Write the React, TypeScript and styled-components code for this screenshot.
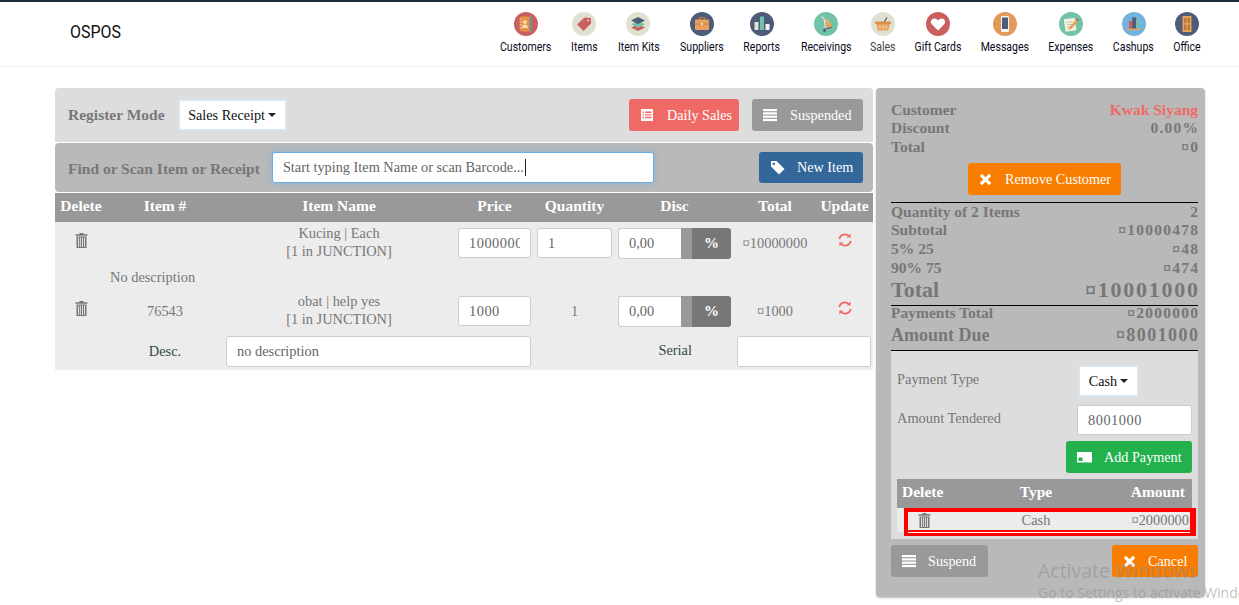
import { ReactNode } from 'react'
import styled, { createGlobalStyle } from 'styled-components'

const serif = `'Liberation Serif', Georgia, serif`

const GlobalStyle = createGlobalStyle`
  html, body {
    margin: 0;
    padding: 0;
    height: 605px;
    overflow: hidden;
    background: #ffffff;
    font-family: ${serif};
  }
  * {
    box-sizing: border-box;
  }
`

const Page = styled.div`
  position: relative;
  width: 1239px;
  height: 605px;
  overflow: hidden;
  border-top: 2px solid #1a2b3c;
`

const Header = styled.header`
  display: flex;
  align-items: flex-start;
  justify-content: space-between;
  height: 65px;
  padding: 10px 40px 0 70px;
  border-bottom: 1px solid #eeeeee;
`

const Logo = styled.div`
  width: 50px;
  margin-top: 9px;
  font-family: Roboto, sans-serif;
  font-size: 19px;
  line-height: 22px;
  color: #111111;
  transform: scaleX(0.84);
  transform-origin: left center;
`

const Nav = styled.nav`
  display: flex;
  gap: 19.8px;
`

const NavItem = styled.a<{ $width: number }>`
  display: flex;
  flex-direction: column;
  align-items: center;
  gap: 4px;
  width: ${({ $width }) => $width}px;
`

const NavLabel = styled.span<{ $active?: boolean }>`
  font-family: Roboto, sans-serif;
  font-size: 13px;
  line-height: 14px;
  color: ${({ $active }) => ($active ? '#444444' : '#0b0b1e')};
  white-space: nowrap;
  transform: scaleX(0.81);
`

const Main = styled.main`
  display: flex;
  gap: 3px;
  padding: 21px 0 0 55px;
`

const LeftColumn = styled.section`
  display: flex;
  flex-direction: column;
  width: 818px;
`

const RegisterBar = styled.div`
  display: flex;
  align-items: center;
  height: 54px;
  padding: 0 10px 0 13px;
  background: #dddddd;
  border-radius: 4px 4px 0 0;
`

const FindBar = styled.div`
  display: flex;
  align-items: center;
  height: 49px;
  margin-top: 1px;
  padding: 0 10px 0 13px;
  background: #b9b9b9;
  border-radius: 4px;
`

const BarLabel = styled.label<{ $drop?: number }>`
  margin-top: ${({ $drop }) => $drop ?? 0}px;
  font-size: 15.5px;
  font-weight: 700;
  color: #777777;
  white-space: nowrap;
`

const Spacer = styled.div`
  flex: 1;
`

const SelectButton = styled.div<{ $width: number; $ml?: number; $mr?: number }>`
  display: flex;
  align-items: center;
  justify-content: center;
  gap: 3px;
  width: ${({ $width }) => $width}px;
  height: 32px;
  margin: 0 ${({ $mr }) => $mr ?? 0}px 0 ${({ $ml }) => $ml ?? 0}px;
  background: #ffffff;
  border: 2px solid #dbe5ee;
  font-size: 14.2px;
  color: #111111;
`

const Caret = styled.span`
  width: 0;
  height: 0;
  border-top: 4px solid #222222;
  border-left: 4px solid transparent;
  border-right: 4px solid transparent;
`

const Button = styled.div<{ $bg: string; $width: number; $height?: number; $gap?: number; $ml?: number }>`
  display: flex;
  align-items: center;
  gap: ${({ $gap }) => $gap ?? 13}px;
  width: ${({ $width }) => $width}px;
  height: ${({ $height }) => $height ?? 32}px;
  margin-left: ${({ $ml }) => $ml ?? 0}px;
  padding-left: 11px;
  background: ${({ $bg }) => $bg};
  border-radius: 3px;
  font-size: 14.2px;
  color: #ffffff;
  white-space: nowrap;
  svg {
    flex: none;
  }
`

const SearchField = styled.div`
  display: flex;
  align-items: center;
  width: 382px;
  height: 31px;
  margin-left: 12px;
  padding-left: 10px;
  background: #ffffff;
  border: 1px solid #66afe9;
  border-radius: 3px;
  box-shadow: 0 0 6px rgba(102, 175, 233, 0.6);
  font-size: 14.3px;
  color: #666666;
  white-space: nowrap;
`

const TextCaret = styled.span`
  width: 1px;
  height: 17px;
  margin-left: 1px;
  background: #222222;
`

const ItemsTable = styled.table`
  width: 818px;
  margin-top: 1px;
  border-collapse: collapse;
  table-layout: fixed;
  background: #ececec;
`

const HeadCell = styled.th`
  height: 29px;
  padding: 0 0 3px;
  background: #999999;
  font-size: 15.5px;
  font-weight: 700;
  color: #ffffff;
  text-align: center;
`

const Cell = styled.td<{ $height?: number; $align?: string; $lift?: number }>`
  height: ${({ $height }) => ($height ? `${$height}px` : 'auto')};
  padding: 0 0 ${({ $lift }) => $lift ?? 0}px;
  font-size: 14.4px;
  line-height: 18px;
  color: #777777;
  text-align: ${({ $align }) => $align ?? 'center'};
  white-space: nowrap;
`

const DarkText = styled.span`
  color: #34494a;
`

const Field = styled.input<{ $width: number; $height?: number; $ml?: number; $numeric?: boolean }>`
  display: block;
  width: ${({ $width }) => $width}px;
  height: ${({ $height }) => $height ?? 30}px;
  margin-left: ${({ $ml }) => $ml ?? 3}px;
  padding: 0 10px;
  background: #ffffff;
  border: 1px solid #cccccc;
  border-radius: 3px;
  outline: none;
  font-family: ${serif};
  font-size: 14.4px;
  letter-spacing: ${({ $numeric }) => ($numeric ? '0.5px' : '0')};
  color: #666666;
`

const DiscGroup = styled.div`
  display: flex;
  width: 113px;
  height: 31px;
  margin-left: 3px;
`

const DiscInput = styled.div`
  display: flex;
  align-items: center;
  width: 63px;
  padding-left: 10px;
  background: #ffffff;
  border: 1px solid #cccccc;
  border-right: 0;
  border-radius: 3px 0 0 3px;
  font-size: 14.4px;
  color: #666666;
`

const DiscToggle = styled.div`
  display: flex;
  flex: 1;
  align-items: center;
  justify-content: center;
  padding-left: 11px;
  background: linear-gradient(to right, #999999 11px, #777777 11px);
  border-radius: 0 3px 3px 0;
  font-size: 15px;
  font-weight: 700;
  color: #ffffff;
`

const SidePanel = styled.aside`
  display: flex;
  flex-direction: column;
  width: 329px;
  height: 509px;
  padding: 12.5px 7px 0 15px;
  background: #b9b9b9;
  border-radius: 4px;
  box-shadow: 0 1px 2px rgba(0, 0, 0, 0.25);
`

const SummaryRow = styled.div<{ $size?: number; $height?: number; $lift?: number }>`
  display: flex;
  flex: none;
  align-items: center;
  justify-content: space-between;
  height: ${({ $height }) => $height ?? 18.5}px;
  padding-bottom: ${({ $lift }) => $lift ?? 0}px;
  font-size: ${({ $size }) => $size ?? 15.5}px;
  font-weight: 700;
  color: #777777;
  white-space: nowrap;
`

const SummaryValue = styled.span`
  letter-spacing: 0.08em;
  margin-right: -0.08em;
`

const Accent = styled.span`
  color: #ef6a66;
`

const Rule = styled.div`
  flex: none;
  height: 1px;
  background: #000000;
`

const CenterRow = styled.div`
  display: flex;
  justify-content: center;
  margin: 7px 0;
`

const PaymentPanel = styled.div`
  display: flex;
  flex-direction: column;
  flex: none;
  height: 188px;
  padding: 14px 6px 0;
  background: #dddddd;
`

const PaymentRow = styled.div<{ $mt?: number }>`
  display: flex;
  align-items: center;
  justify-content: space-between;
  margin-top: ${({ $mt }) => $mt ?? 0}px;
  font-size: 14.4px;
  color: #777777;
`

const PaymentLabel = styled.span<{ $lift?: number }>`
  margin-bottom: ${({ $lift }) => $lift ?? 0}px;
`

const PaymentEnd = styled.div`
  display: flex;
  justify-content: flex-end;
  margin-top: 6px;
`

const PaymentHead = styled.div`
  display: grid;
  grid-template-columns: 85px 98px 1fr;
  align-items: center;
  height: 29px;
  margin-top: 6px;
  padding: 0 7px 3px 5px;
  background: #999999;
  font-size: 15.5px;
  font-weight: 700;
  color: #ffffff;
`

const PaymentLine = styled.div`
  position: relative;
  display: grid;
  grid-template-columns: 85px 98px 1fr;
  align-items: center;
  height: 24px;
  padding: 0 3px 0 5px;
  background: #ececec;
  font-size: 14.4px;
  color: #777777;
`

const HighlightBox = styled.div`
  position: absolute;
  top: 0;
  left: 7px;
  width: 292px;
  height: 28px;
  border-style: solid;
  border-color: #ff0000;
  border-width: 4px 6px 3px 4px;
  box-shadow: inset 0 -1px 0 #ffffff, inset 0 -3px 0 #ff0000;
`

const GridCenter = styled.span`
  text-align: center;
`

const GridEnd = styled.span`
  text-align: right;
`

const TrashSlot = styled.span`
  display: flex;
  padding-left: 16px;
`

const FootRow = styled.div`
  display: flex;
  justify-content: space-between;
  margin-top: 6px;
`

const Watermark = styled.div`
  position: absolute;
  top: 557px;
  left: 1038px;
  font-family: 'Open Sans', sans-serif;
  white-space: nowrap;
  color: rgba(140, 140, 140, 0.55);
  pointer-events: none;
`

const WatermarkTitle = styled.div`
  font-size: 19.5px;
  line-height: 24px;
`

const WatermarkText = styled.div`
  font-size: 14px;
  line-height: 20px;
`

const Disc = ({ fill, children }: { fill: string; children: ReactNode }) => (
  <svg width="24" height="24" viewBox="0 0 24 24">
    <circle cx="12" cy="12" r="12" fill={fill} />
    {children}
  </svg>
)

const CustomersIcon = () => (
  <Disc fill="#c95f5f">
    <rect x="6.5" y="4.5" width="11" height="15" rx="1" fill="#e8913f" />
    <rect x="15.5" y="4.5" width="2" height="15" fill="#5f8fa8" />
    <circle cx="11" cy="10" r="2" fill="#f7dcae" />
    <path d="M8 16c0-2.5 1.3-3.5 3-3.5s3 1 3 3.5z" fill="#f7dcae" />
    <path d="M5.5 7h2M5.5 10h2M5.5 13h2M5.5 16h2" stroke="#f2f2f2" strokeWidth="0.9" />
  </Disc>
)

const ItemsIcon = () => (
  <Disc fill="#e0e0d1">
    <path d="M5 12.5 12.5 5.5 19 6 19 11.5 11.5 19z" fill="#c95f5f" />
    <circle cx="16.2" cy="8.6" r="1" fill="#e0e0d1" />
  </Disc>
)

const KitsIcon = () => (
  <Disc fill="#e0e0d1">
    <path d="M12 12.5 19 15.5 12 19 5 15.5z" fill="#c95f5f" />
    <path d="M12 9 19 12.2 12 15.7 5 12.2z" fill="#72c2a8" />
    <path d="M12 5 19 8.5 12 12 5 8.5z" fill="#4d5c78" />
  </Disc>
)

const SuppliersIcon = () => (
  <Disc fill="#4d5c78">
    <rect x="9.5" y="5.5" width="5" height="3" fill="none" stroke="#b9793f" strokeWidth="1.2" />
    <rect x="5" y="7.5" width="14" height="10.5" rx="1" fill="#e8a05c" />
    <path d="M5 12h14" stroke="#b9793f" strokeWidth="0.8" />
    <rect x="11" y="11" width="2" height="2" fill="#f4dcb8" />
  </Disc>
)

const ReportsIcon = () => (
  <Disc fill="#4d5c78">
    <rect x="4.5" y="10" width="4" height="8" fill="#e0e0d1" />
    <rect x="10" y="4.5" width="4" height="13.5" fill="#72c2a8" />
    <rect x="15.5" y="12" width="4" height="6" fill="#f2f2f2" />
  </Disc>
)

const ReceivingsIcon = () => (
  <Disc fill="#72c2a8">
    <path d="M7 4.5 10 6.5 11.5 16.5" stroke="#f2f2f2" strokeWidth="1" fill="none" />
    <rect x="12" y="11" width="5.5" height="5" fill="#e8a05c" />
    <rect x="11" y="7" width="4" height="4" fill="#e0b070" />
    <path d="M10.5 17 18 15.5" stroke="#4d5c78" strokeWidth="1" />
    <circle cx="10.5" cy="18.5" r="1.5" fill="#4d5c78" />
  </Disc>
)

const SalesIcon = () => (
  <Disc fill="#e0e0d1">
    <path d="M12.5 11 16 5.5" stroke="#4d5c78" strokeWidth="1.3" />
    <rect x="4" y="9.5" width="16" height="2.4" rx="0.6" fill="#d98e4f" />
    <path d="M5.2 12h13.6l-1.6 6.5H6.8z" fill="#e8a05c" />
    <path d="M9 13.5v3M12 13.5v3M15 13.5v3" stroke="#f4dcb8" strokeWidth="1.2" />
  </Disc>
)

const GiftIcon = () => (
  <Disc fill="#c95f5f">
    <path d="M12 18.5 5.8 12.3C3.8 9.8 5.5 6.6 8.4 6.6c1.5 0 2.8.8 3.6 2 .8-1.2 2.1-2 3.6-2 2.9 0 4.6 3.2 2.6 5.7z" fill="#ffffff" />
  </Disc>
)

const MessagesIcon = () => (
  <Disc fill="#e29a5a">
    <rect x="8" y="4" width="8" height="16" rx="1" fill="#f4f4f4" />
    <rect x="9" y="5.5" width="6" height="11.5" fill="#4d5c78" />
  </Disc>
)

const ExpensesIcon = () => (
  <Disc fill="#72c2a8">
    <rect x="5.5" y="6.5" width="11" height="12.5" fill="#f4f0dc" transform="rotate(-8 11 12)" />
    <path d="M7.5 10h6M7.8 12.5h6M8 15h5" stroke="#a8b8a8" strokeWidth="0.7" />
    <path d="M10 15.5 17 7.5 19 9.3 12 17.3 9.6 17.8z" fill="#e8a05c" />
    <path d="M17 7.5 18 6.3 20 8.1 19 9.3z" fill="#c95f5f" />
  </Disc>
)

const CashupsIcon = () => (
  <Disc fill="#74b3dc">
    <rect x="5" y="16.5" width="14" height="1.6" fill="#e8a05c" />
    <rect x="7" y="9" width="3.2" height="7.5" fill="#c95f5f" />
    <rect x="10.2" y="5.5" width="4" height="11" fill="#4d5c78" />
    <rect x="14.2" y="8" width="3" height="8.5" fill="#72c2a8" />
  </Disc>
)

const OfficeIcon = () => (
  <Disc fill="#4d5c78">
    <rect x="7.5" y="4" width="9" height="16" fill="#e8a05c" />
    <rect x="9" y="6" width="2.4" height="5" fill="#b9793f" />
    <rect x="12.6" y="6" width="2.4" height="5" fill="#b9793f" />
    <rect x="9" y="12.5" width="2.4" height="5.5" fill="#b9793f" />
    <rect x="12.6" y="12.5" width="2.4" height="5.5" fill="#b9793f" />
  </Disc>
)

const TrashIcon = () => (
  <svg width="13" height="15" viewBox="0 0 13 15" fill="#777777">
    <path d="M4.5 0h4v1.2H12.5v1.6H.5V1.2h4z" />
    <path d="M1.5 3.6h10V15h-10zM3 4.6V14h.9V4.6zM4.9 4.6V14h.9V4.6zM7.1 4.6V14H8V4.6zM9 4.6V14h.9V4.6z" fillRule="evenodd" />
  </svg>
)

const RefreshIcon = () => (
  <svg width="14" height="14" viewBox="0 0 14 14" fill="none" stroke="#ef6a66" strokeWidth="1.7">
    <path d="M1.3 6.2A5.6 5.6 0 0 1 11 3.2" />
    <path d="M12.7 7.8A5.6 5.6 0 0 1 3 10.8" />
    <path d="M12.6 .6v4h-4z" fill="#ef6a66" stroke="none" />
    <path d="M1.4 13.4v-4h4z" fill="#ef6a66" stroke="none" />
  </svg>
)

const ListIcon = () => (
  <svg width="14" height="14" viewBox="0 0 14 14">
    <path
      fill="#ffffff"
      fillRule="evenodd"
      d="M1 1h12v12H1zM2.5 3.5V5h1.5V3.5zM5 3.5V5h6.5V3.5zM2.5 6.2v1.4h1.5V6.2zM5 6.2v1.4h6.5V6.2zM2.5 8.8v1.5h1.5V8.8zM5 8.8v1.5h6.5V8.8z"
    />
  </svg>
)

const LinesIcon = () => (
  <svg width="14" height="14" viewBox="0 0 14 14" fill="#ffffff">
    <rect y="1" width="14" height="2.2" />
    <rect y="4.3" width="14" height="2.2" />
    <rect y="7.6" width="14" height="2.2" />
    <rect y="10.9" width="14" height="2.2" />
  </svg>
)

const TagIcon = () => (
  <svg width="15" height="15" viewBox="0 0 15 15">
    <path
      fill="#ffffff"
      fillRule="evenodd"
      d="M1 1h5.5l8 8-5.5 5.5-8-8zM3.8 2.6a1.2 1.2 0 1 0 .01 0z"
    />
  </svg>
)

const CrossIcon = () => (
  <svg width="13" height="13" viewBox="0 0 13 13">
    <path
      fill="#ffffff"
      d="M3 .8 6.5 4.3 10 .8 12.2 3 8.7 6.5 12.2 10 10 12.2 6.5 8.7 3 12.2.8 10 4.3 6.5.8 3z"
    />
  </svg>
)

const CardIcon = () => (
  <svg width="15" height="13" viewBox="0 0 15 13">
    <path
      fill="#ffffff"
      fillRule="evenodd"
      d="M0 1h15v10.5H0zM1.5 6.5v3.5h4V6.5z"
    />
  </svg>
)

const navItems = [
  { label: 'Customers', width: 51, icon: <CustomersIcon /> },
  { label: 'Items', width: 26, icon: <ItemsIcon /> },
  { label: 'Item Kits', width: 43, icon: <KitsIcon /> },
  { label: 'Suppliers', width: 44, icon: <SuppliersIcon /> },
  { label: 'Reports', width: 37, icon: <ReportsIcon /> },
  { label: 'Receivings', width: 51, icon: <ReceivingsIcon /> },
  { label: 'Sales', width: 23, icon: <SalesIcon />, active: true },
  { label: 'Gift Cards', width: 48, icon: <GiftIcon /> },
  { label: 'Messages', width: 47, icon: <MessagesIcon /> },
  { label: 'Expenses', width: 45, icon: <ExpensesIcon /> },
  { label: 'Cashups', width: 41, icon: <CashupsIcon /> },
  { label: 'Office', width: 25, icon: <OfficeIcon /> },
]

const summaryTop = [
  { label: 'Discount', value: '0.00%' },
  { label: 'Total', value: '¤0' },
]

const summaryMiddle = [
  { label: 'Quantity of 2 Items', value: '2', height: 17 },
  { label: 'Subtotal', value: '¤10000478', height: 19 },
  { label: '5% 25', value: '¤48', height: 19 },
  { label: '90% 75', value: '¤474', height: 19 },
]

export default function App() {
  return (
    <Page>
      <GlobalStyle />
      <Header>
        <Logo>OSPOS</Logo>
        <Nav>
          {navItems.map(({ label, width, icon, active }) => (
            <NavItem key={label} $width={width}>
              {icon}
              <NavLabel $active={active}>{label}</NavLabel>
            </NavItem>
          ))}
        </Nav>
      </Header>

      <Main>
        <LeftColumn>
          <RegisterBar>
            <BarLabel>Register Mode</BarLabel>
            <SelectButton $width={109} $ml={13}>
              Sales Receipt <Caret />
            </SelectButton>
            <Spacer />
            <Button $bg="#ef6a66" $width={110}>
              <ListIcon />
              Daily Sales
            </Button>
            <Button $bg="#999999" $width={111} $ml={13}>
              <LinesIcon />
              Suspended
            </Button>
          </RegisterBar>

          <FindBar>
            <BarLabel $drop={2}>Find or Scan Item or Receipt</BarLabel>
            <SearchField>
              Start typing Item Name or scan Barcode...
              <TextCaret />
            </SearchField>
            <Spacer />
            <Button $bg="#336699" $width={104} $height={31} $gap={12}>
              <TagIcon />
              New Item
            </Button>
          </FindBar>

          <ItemsTable>
            <colgroup>
              <col style={{ width: 52 }} />
              <col style={{ width: 116 }} />
              <col style={{ width: 232 }} />
              <col style={{ width: 79 }} />
              <col style={{ width: 81 }} />
              <col style={{ width: 119 }} />
              <col style={{ width: 82 }} />
              <col style={{ width: 57 }} />
            </colgroup>
            <thead>
              <tr>
                <HeadCell>Delete</HeadCell>
                <HeadCell>Item #</HeadCell>
                <HeadCell>Item Name</HeadCell>
                <HeadCell>Price</HeadCell>
                <HeadCell>Quantity</HeadCell>
                <HeadCell>Disc</HeadCell>
                <HeadCell>Total</HeadCell>
                <HeadCell>Update</HeadCell>
              </tr>
            </thead>
            <tbody>
              <tr>
                <Cell $height={42} $lift={2}>
                  <TrashIcon />
                </Cell>
                <Cell />
                <Cell $lift={2}>
                  Kucing | Each
                  <br />
                  [1 in JUNCTION]
                </Cell>
                <Cell>
                  <Field $width={73} $numeric defaultValue="10000000" readOnly />
                </Cell>
                <Cell>
                  <Field $width={75} $numeric defaultValue="1" readOnly />
                </Cell>
                <Cell>
                  <DiscGroup>
                    <DiscInput>0,00</DiscInput>
                    <DiscToggle>%</DiscToggle>
                  </DiscGroup>
                </Cell>
                <Cell>¤10000000</Cell>
                <Cell $lift={2}>
                  <RefreshIcon />
                </Cell>
              </tr>
              <tr>
                <Cell $height={26} />
                <Cell $align="left" colSpan={2} style={{ paddingLeft: 3 }}>
                  No description
                </Cell>
                <Cell colSpan={5} />
              </tr>
              <tr>
                <Cell $height={42} $lift={2}>
                  <TrashIcon />
                </Cell>
                <Cell>76543</Cell>
                <Cell $lift={2}>
                  obat | help yes
                  <br />
                  [1 in JUNCTION]
                </Cell>
                <Cell>
                  <Field $width={73} $numeric defaultValue="1000" readOnly />
                </Cell>
                <Cell>1</Cell>
                <Cell>
                  <DiscGroup>
                    <DiscInput>0,00</DiscInput>
                    <DiscToggle>%</DiscToggle>
                  </DiscGroup>
                </Cell>
                <Cell>¤1000</Cell>
                <Cell $lift={2}>
                  <RefreshIcon />
                </Cell>
              </tr>
              <tr>
                <Cell $height={38} />
                <Cell>
                  <DarkText>Desc.</DarkText>
                </Cell>
                <Cell colSpan={2}>
                  <Field $width={305} $height={31} defaultValue="no description" readOnly />
                </Cell>
                <Cell colSpan={2} $lift={2} $align="right" style={{ paddingRight: 42 }}>
                  <DarkText>Serial</DarkText>
                </Cell>
                <Cell colSpan={2}>
                  <Field $width={134} $height={31} readOnly />
                </Cell>
              </tr>
            </tbody>
          </ItemsTable>
        </LeftColumn>

        <SidePanel>
          <SummaryRow>
            Customer
            <Accent>Kwak Siyang</Accent>
          </SummaryRow>
          {summaryTop.map(({ label, value }) => (
            <SummaryRow key={label}>
              {label}
              <SummaryValue>{value}</SummaryValue>
            </SummaryRow>
          ))}
          <CenterRow>
            <Button $bg="#f97d00" $width={153} $gap={13}>
              <CrossIcon />
              Remove Customer
            </Button>
          </CenterRow>
          <Rule />
          {summaryMiddle.map(({ label, value, height }) => (
            <SummaryRow key={label} $height={height}>
              {label}
              <SummaryValue>{value}</SummaryValue>
            </SummaryRow>
          ))}
          <SummaryRow $size={22} $height={28} $lift={3}>
            Total
            <SummaryValue>¤10001000</SummaryValue>
          </SummaryRow>
          <Rule />
          <SummaryRow $height={16} $lift={2}>
            Payments Total
            <SummaryValue>¤2000000</SummaryValue>
          </SummaryRow>
          <SummaryRow $size={18} $height={28} $lift={2}>
            Amount Due
            <SummaryValue>¤8001000</SummaryValue>
          </SummaryRow>
          <Rule />
          <PaymentPanel>
            <PaymentRow>
              <PaymentLabel $lift={3}>Payment Type</PaymentLabel>
              <SelectButton $width={61} $mr={53}>
                Cash <Caret />
              </SelectButton>
            </PaymentRow>
            <PaymentRow $mt={8}>
              <PaymentLabel $lift={4}>Amount Tendered</PaymentLabel>
              <Field $width={115} $ml={0} $numeric defaultValue="8001000" readOnly />
            </PaymentRow>
            <PaymentEnd>
              <Button $bg="#22b14c" $width={126} $gap={12}>
                <CardIcon />
                Add Payment
              </Button>
            </PaymentEnd>
            <PaymentHead>
              <span>Delete</span>
              <GridCenter>Type</GridCenter>
              <GridEnd>Amount</GridEnd>
            </PaymentHead>
            <PaymentLine>
              <TrashSlot>
                <TrashIcon />
              </TrashSlot>
              <GridCenter>Cash</GridCenter>
              <GridEnd>¤2000000</GridEnd>
              <HighlightBox />
            </PaymentLine>
          </PaymentPanel>
          <FootRow>
            <Button $bg="#999999" $width={97} $gap={12}>
              <LinesIcon />
              Suspend
            </Button>
            <Button $bg="#f97d00" $width={86} $gap={12}>
              <CrossIcon />
              Cancel
            </Button>
          </FootRow>
        </SidePanel>
      </Main>

      <Watermark>
        <WatermarkTitle>Activate Windows</WatermarkTitle>
        <WatermarkText>Go to Settings to activate Windows.</WatermarkText>
      </Watermark>
    </Page>
  )
}
